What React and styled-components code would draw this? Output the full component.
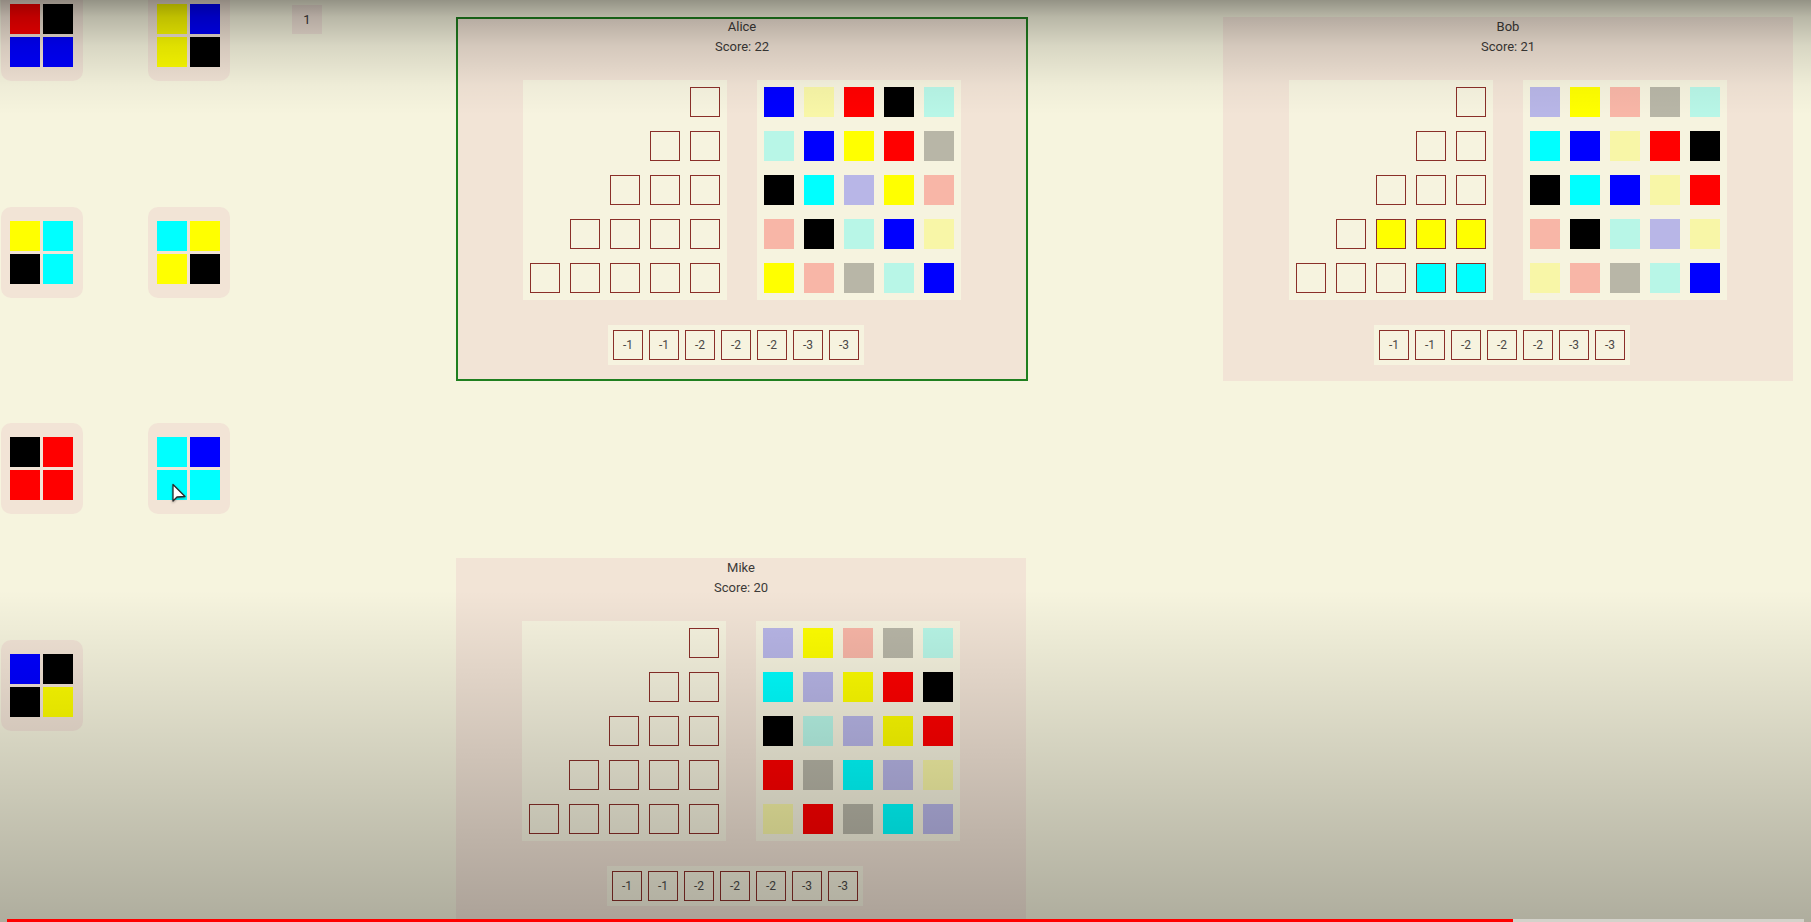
import React from "react";
import styled, { createGlobalStyle } from "styled-components";

const GlobalStyle = createGlobalStyle`
  html, body {
    margin: 0;
    padding: 0;
    background: #f6f4de;
    overflow: hidden;
  }
  body {
    font-family: Roboto, "Liberation Sans", sans-serif;
    color: #3c3a38;
  }
`;

const COLORS = {
  blue: "#0000ff",
  yellow: "#ffff00",
  red: "#ff0000",
  black: "#000000",
  cyan: "#00ffff",
};
const WALL_ORDER = ["blue", "yellow", "red", "black", "cyan"];

const Page = styled.div`
  position: relative;
  display: flex;
  align-items: flex-start;
  width: 1811px;
  height: 922px;
  padding-left: 1px;
  box-sizing: border-box;
  overflow: hidden;
`;

const FactoryArea = styled.div`
  display: grid;
  grid-template-columns: repeat(2, 82px);
  column-gap: 65px;
  row-gap: 125.7px;
  margin-top: -10px;
`;

const Factory = styled.div`
  display: grid;
  grid-template-columns: repeat(2, 30px);
  grid-template-rows: repeat(2, 30px);
  gap: 3px;
  width: 82px;
  height: 91px;
  box-sizing: border-box;
  padding: 14px 10px 14px 9px;
  background: #f2e4d6;
  border-radius: 10px;
`;

const FactoryTile = styled.div`
  background: ${(p) => COLORS[p.$color]};
`;

const CenterPool = styled.div`
  display: flex;
  margin-left: 62px;
  margin-top: 5px;
`;

const FirstMarker = styled.div`
  display: flex;
  align-items: center;
  justify-content: center;
  width: 30px;
  height: 29px;
  background: #f0e2d6;
  font-size: 13px;
  color: #3a3836;
`;

const Boards = styled.div`
  display: grid;
  grid-template-columns: 572px 570px;
  column-gap: 195px;
  row-gap: 177px;
  margin-left: 134px;
  margin-top: 17px;
`;

const Board = styled.div`
  display: flex;
  flex-direction: column;
  align-items: center;
  width: ${(p) => (p.$active ? "572px" : "570px")};
  height: 364px;
  box-sizing: border-box;
  background: #f2e4d6;
  outline: ${(p) => (p.$active ? "2px solid #1f7f1f" : "none")};
  outline-offset: -2px;
`;

const PlayerName = styled.div`
  font-size: 13px;
  line-height: 19.5px;
  text-align: center;
`;

const BoardBody = styled.div`
  display: flex;
  gap: 30px;
  margin-top: 24px;
`;

const TileGrid = styled.div`
  display: grid;
  grid-template-columns: repeat(5, 30px);
  grid-template-rows: repeat(5, 30px);
  column-gap: 10px;
  row-gap: 14px;
  padding: 7px;
  background: #f6f3df;
`;

const LineCell = styled.div`
  box-sizing: border-box;
  border: 1px solid #8a2f29;
  background: ${(p) => (p.$color ? COLORS[p.$color] : "transparent")};
`;

const WallTile = styled.div`
  background: ${(p) => COLORS[p.$color]};
  opacity: ${(p) => (p.$placed ? 1 : 0.25)};
`;

const FloorLine = styled.div`
  display: flex;
  gap: 6px;
  padding: 5px;
  margin-top: 25px;
  margin-right: 12px;
  background: #f6f3df;
`;

const FloorCell = styled.div`
  display: flex;
  align-items: center;
  justify-content: center;
  width: 30px;
  height: 30px;
  box-sizing: border-box;
  border: 1px solid #8a2f29;
  font-size: 12px;
  color: #4a4846;
`;

const TopShade = styled.div`
  position: absolute;
  top: 0;
  left: 0;
  right: 0;
  height: 115px;
  pointer-events: none;
  background: linear-gradient(
    to bottom,
    rgba(0, 0, 0, 0.4) 0px,
    rgba(0, 0, 0, 0.25) 17px,
    rgba(0, 0, 0, 0.12) 46px,
    rgba(0, 0, 0, 0.03) 85px,
    rgba(0, 0, 0, 0) 115px
  );
`;

const BottomShade = styled.div`
  position: absolute;
  top: 590px;
  left: 0;
  right: 0;
  bottom: 0;
  pointer-events: none;
  background: linear-gradient(to bottom, rgba(0, 0, 0, 0), rgba(0, 0, 0, 0.29));
`;

const Progress = styled.div`
  position: absolute;
  left: 7px;
  right: 7px;
  bottom: 0;
  height: 3px;
  background: rgba(255, 255, 255, 0.45);
`;

const ProgressFill = styled.div`
  height: 100%;
  background: #ff0000;
`;

const Cursor = styled.svg`
  position: absolute;
  left: 171px;
  top: 483px;
  pointer-events: none;
  filter: drop-shadow(0 1px 1px rgba(0, 0, 0, 0.35));
`;

const factories = [
  ["red", "black", "blue", "blue"],
  ["yellow", "blue", "yellow", "black"],
  ["yellow", "cyan", "black", "cyan"],
  ["cyan", "yellow", "yellow", "black"],
  ["black", "red", "red", "red"],
  ["cyan", "blue", "cyan", "cyan"],
  ["blue", "black", "black", "yellow"],
];

const players = [
  {
    name: "Alice",
    score: 22,
    active: true,
    lines: [[], [], [], [], []],
    wall: ["10110", "01110", "11010", "01010", "10001"],
  },
  {
    name: "Bob",
    score: 21,
    lines: [[], [], [], ["yellow", "yellow", "yellow"], ["cyan", "cyan"]],
    wall: ["01000", "11011", "11101", "01000", "00001"],
  },
  {
    name: "Mike",
    score: 20,
    lines: [[], [], [], [], []],
    wall: ["01000", "10111", "10011", "10100", "01010"],
  },
];

const floor = [-1, -1, -2, -2, -2, -3, -3];

function PatternLines({ lines }) {
  const cells = [];
  for (let r = 0; r < 5; r++) {
    const size = r + 1;
    const filled = lines[r];
    for (let c = 0; c < 5; c++) {
      const pos = c - (4 - r);
      if (pos < 0) {
        cells.push(<div key={`${r}-${c}`} />);
      } else {
        const color = pos >= size - filled.length ? filled[0] : null;
        cells.push(<LineCell key={`${r}-${c}`} $color={color} />);
      }
    }
  }
  return <TileGrid>{cells}</TileGrid>;
}

function Wall({ wall }) {
  const tiles = [];
  for (let r = 0; r < 5; r++) {
    for (let c = 0; c < 5; c++) {
      const color = WALL_ORDER[(c - r + 5) % 5];
      tiles.push(
        <WallTile key={`${r}-${c}`} $color={color} $placed={wall[r][c] === "1"} />
      );
    }
  }
  return <TileGrid>{tiles}</TileGrid>;
}

function PlayerBoard({ player }) {
  return (
    <Board $active={player.active}>
      <PlayerName>{player.name}</PlayerName>
      <PlayerName>Score: {player.score}</PlayerName>
      <BoardBody>
        <PatternLines lines={player.lines} />
        <Wall wall={player.wall} />
      </BoardBody>
      <FloorLine>
        {floor.map((v, i) => (
          <FloorCell key={i}>{v}</FloorCell>
        ))}
      </FloorLine>
    </Board>
  );
}

export default function App() {
  return (
    <>
      <GlobalStyle />
      <Page>
        <FactoryArea>
          {factories.map((f, i) => (
            <Factory key={i}>
              {f.map((c, j) => (
                <FactoryTile key={j} $color={c} />
              ))}
            </Factory>
          ))}
        </FactoryArea>
        <CenterPool>
          <FirstMarker>1</FirstMarker>
        </CenterPool>
        <Boards>
          {players.map((p) => (
            <PlayerBoard key={p.name} player={p} />
          ))}
        </Boards>
        <TopShade />
        <BottomShade />
        <Cursor width="16" height="22" viewBox="0 0 16 22">
          <path
            d="M2 1.5 L2 18 L6 14 L14 13.5 Z"
            fill="#ffffff"
            stroke="#2a2a2a"
            strokeWidth="1.3"
            strokeLinejoin="round"
          />
        </Cursor>
        <Progress>
          <ProgressFill style={{ width: "1506px" }} />
        </Progress>
      </Page>
    </>
  );
}
